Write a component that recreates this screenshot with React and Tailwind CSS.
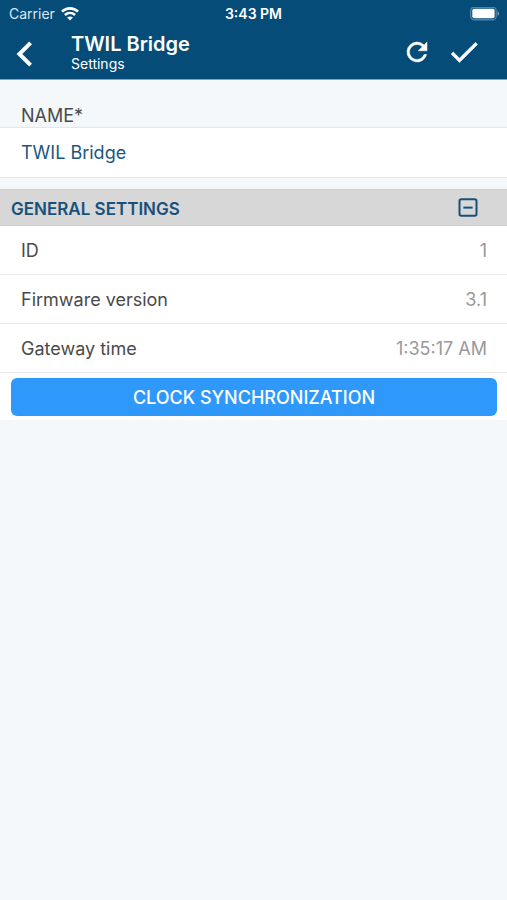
import React, { useState } from 'react';

const details = [
  { label: 'ID', value: '1' },
  { label: 'Firmware version', value: '3.1' },
  { label: 'Gateway time', value: '1:35:17 AM' },
];

function StatusBar() {
  return (
    <div className="grid h-7 grid-cols-3 items-center px-2 text-sm text-white">
      <div className="flex items-center gap-1.5 pl-px">
        <span className="text-[#dbe8f1]">Carrier</span>
        <svg className="h-[14px] w-[18px]" viewBox="0 0 18 14" fill="none" stroke="currentColor" strokeWidth="2.6">
          <path d="M1 4.6C5.6.3 12.4.3 17 4.6" />
          <path d="M3.9 8c3-2.7 7.2-2.7 10.2 0" />
          <path d="M9 13.4 6.1 10.5c1.6-1.4 4.2-1.4 5.8 0z" fill="currentColor" stroke="none" />
        </svg>
      </div>
      <span className="text-center font-semibold">3:43 PM</span>
      <svg className="h-[14px] w-[30px] justify-self-end" viewBox="0 0 30 14">
        <rect x="1.7" y="0.2" width="25.5" height="12.6" rx="3.5" fill="none" stroke="#4f82a5" strokeWidth="1.4" />
        <rect x="3.3" y="1.8" width="22.3" height="9.4" rx="1.8" fill="#fff" />
        <path d="M28.6 4.3c2 .8 2 3.6 0 4.4z" fill="#7fa3bd" />
      </svg>
    </div>
  );
}

function Header({ title }) {
  return (
    <header className="border-b border-[#7fa6c1] bg-[#054c78] text-white">
      <StatusBar />
      <div className="flex h-[51px] items-center pr-[25px] pl-4">
        <button type="button" aria-label="Back" className="w-[55px]">
          <svg className="h-[26px] w-[17px]" viewBox="0 0 17 26" fill="none" stroke="currentColor" strokeWidth="4">
            <path d="M14.6 1.8 3.4 13l11.2 11.2" />
          </svg>
        </button>
        <div className="flex-1 pb-1">
          <h1 className="text-xl leading-6 font-semibold">{title}</h1>
          <p className="text-sm leading-4">Settings</p>
        </div>
        <div className="flex items-center gap-3.5 pb-1">
          <button type="button" aria-label="Refresh">
            <svg className="size-[30px]" viewBox="0 0 24 24" fill="currentColor" stroke="currentColor" strokeWidth="0.4">
              <path d="M17.65 6.35A7.96 7.96 0 0 0 12 4a8 8 0 1 0 7.73 10h-2.08A6 6 0 1 1 12 6c1.66 0 3.14.69 4.22 1.78L13 11h7V4z" />
            </svg>
          </button>
          <button type="button" aria-label="Save">
            <svg className="size-9" viewBox="0 0 24 24" fill="currentColor" stroke="currentColor" strokeWidth="0.4">
              <path d="M9 16.17 4.83 12l-1.42 1.41L9 19 21 7l-1.41-1.41z" />
            </svg>
          </button>
        </div>
      </div>
    </header>
  );
}

export default function App() {
  const [name, setName] = useState('TWIL Bridge');
  const [open, setOpen] = useState(true);

  return (
    <div className="min-h-screen bg-[#f4f8fa] font-['Inter','Liberation_Sans',sans-serif] text-lg leading-6 text-[#4a4a4a]">
      <Header title="TWIL Bridge" />

      <main>
        <label htmlFor="name" className="block px-5 pt-[25px] pl-[21px] leading-[22px]">NAME*</label>
        <input
          id="name"
          value={name}
          onChange={(e) => setName(e.target.value)}
          className="block h-[51px] w-full border-y border-[#e4e7e9] bg-white px-5 pl-[21px] text-[#1c5680] outline-none"
        />

        <section className="mt-[11px] bg-white">
          <div className="flex h-[37px] items-center justify-between border-y border-[#cfcfcf] bg-[#d7d7d7] pr-[29px] pl-[11px] text-[#17517a]">
            <h2 className="pt-0.5 text-[17px] font-semibold">GENERAL SETTINGS</h2>
            <button type="button" aria-label="Toggle general settings" aria-expanded={open} onClick={() => setOpen(!open)}>
              <svg className="size-5" viewBox="0 0 20 20" fill="none" stroke="currentColor" strokeWidth="2">
                <rect x="1.5" y="1.2" width="17" height="16.6" rx="1.8" />
                <path d="M5.4 9.6h9.2" />
              </svg>
            </button>
          </div>

          {open && (
            <div className="pb-1">
              <dl>
                {details.map((item) => (
                  <div key={item.label} className="flex h-[49px] items-center justify-between border-b border-[#e9e9eb] pt-0.5 pr-5 pl-[21px]">
                    <dt>{item.label}</dt>
                    <dd className="text-[#999999]">{item.value}</dd>
                  </div>
                ))}
              </dl>
              <div className="pt-[5px] pr-2.5 pl-[11px]">
                <button type="button" className="h-[38px] w-full rounded-md bg-[#2f99fb] pt-0.5 font-medium text-white">
                  CLOCK SYNCHRONIZATION
                </button>
              </div>
            </div>
          )}
        </section>
      </main>
    </div>
  );
}
